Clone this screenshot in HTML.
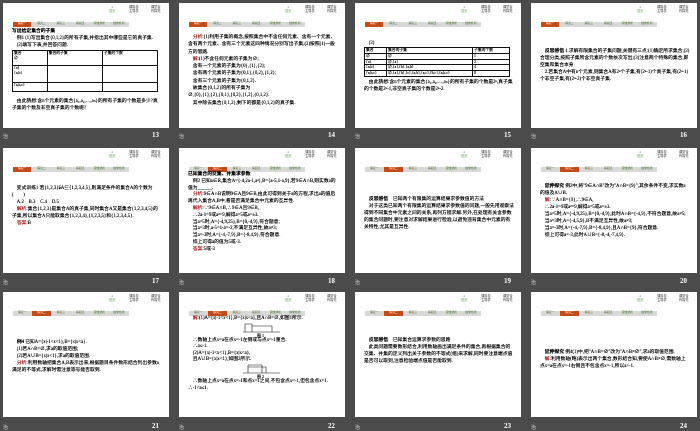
<!DOCTYPE html>
<html><head><meta charset="utf-8"><style>
*{margin:0;padding:0;box-sizing:border-box}
body{width:700px;height:431px;background:#4b4b4b;position:relative;overflow:hidden;font-family:"Liberation Serif","Noto Sans CJK SC",sans-serif;}
.s{position:absolute;width:166px;height:125px;background:#fff;overflow:hidden;color:#111}
.nav{position:absolute;top:3px;font-size:3.2px;line-height:3.6px;color:#222;text-align:center}
.tabs{position:absolute;left:10px;top:19px;height:4.5px;width:116px;background:#d8d8d8;display:flex}
.tabs span{flex:1;font-size:2.8px;line-height:4.5px;color:#3a6a1a;text-align:center;margin-right:1px}
.tabs span.on{background:#c54a1a;color:#fff}
.c{position:absolute;left:9px;right:7px;font-size:4.8px;line-height:7px;color:#000;text-shadow:0 0 .3px #000}
.r{color:#e01010}
.b{font-weight:bold}
.lab{position:absolute;color:#ddd;font-size:5px}
.num{position:absolute;color:#fff;font-size:7px;font-weight:bold;font-family:"Liberation Serif",serif}
table{border-collapse:collapse;font-size:3.8px;line-height:4.8px}
td{border:1px solid #111;vertical-align:top;padding:0 1px}
</style></head><body>

<div class="s" style="left:3px;top:3px">
<div class="nav" style="left:106px">▪<br><span style="color:#5a3">首页</span></div><div class="nav" style="left:126px">课前自<br>主导学</div><div class="nav" style="left:148px">课堂合<br>作探究</div>
<div class="tabs"><span class="on">探究一</span><span>探究二</span><span>探究三</span><span>探究四</span><span>思维辨析</span><span>随堂检测</span></div>
<div class="c" style="top:25px"><b>写出给定集合的子集</b><br>　例1 (1)写出集合{0,1,2}的所有子集,并指出其中哪些是它的真子集.<br>　(2)填写下表,并回答问题.
<table style="width:146px;margin-top:1px"><tr><td style="height:15px">集合<br>∅</td><td>集合的子集</td><td>子集的个数</td></tr><tr><td style="height:17px">{a}<br>{a,b}</td><td></td><td></td></tr><tr><td style="height:9px">{a,b,c}</td><td></td><td></td></tr></table>
<div style="margin-top:6px">　由此猜想:含n个元素的集合{a₁,a₂,…,aₙ}的所有子集的个数是多少?真子集的个数及非空真子集的个数呢?</div></div></div>
<div class="lab" style="left:3px;top:133px">治</div><div class="num" style="left:152px;top:131px">13</div>

<div class="s" style="left:179px;top:3px">
<div class="nav" style="left:106px">▪<br><span style="color:#5a3">首页</span></div><div class="nav" style="left:126px">课前自<br>主导学</div><div class="nav" style="left:148px">课堂合<br>作探究</div>
<div class="tabs"><span class="on">探究一</span><span>探究二</span><span>探究三</span><span>探究四</span><span>思维辨析</span><span>随堂检测</span></div>
<div class="c" style="top:31px;line-height:7.3px">　<span class="r">分析</span>:(1)利用子集的概念,按照集合中不含任何元素、含有一个元素、含有两个元素、含有三个元素这四种情况分别写出子集;(2)按照(1)一般方的思路.<br>　<span class="r">解</span>:(1)不含任何元素的子集为∅;<br>　含有一个元素的子集为{0},{1},{2};<br>　含有两个元素的子集为{0,1},{0,2},{1,2};<br>　含有三个元素的子集为{0,1,2}.<br>　故集合{0,1,2}的所有子集为<br>∅,{0},{1},{2},{0,1},{0,2},{1,2},{0,1,2}.<br>　其中除去集合{0,1,2},剩下的都是{0,1,2}的真子集.</div></div>
<div class="lab" style="left:179px;top:133px">治</div><div class="num" style="left:328px;top:131px">14</div>

<div class="s" style="left:355px;top:3px">
<div class="nav" style="left:106px">▪<br><span style="color:#5a3">首页</span></div><div class="nav" style="left:126px">课前自<br>主导学</div><div class="nav" style="left:148px">课堂合<br>作探究</div>
<div class="tabs"><span class="on">探究一</span><span>探究二</span><span>探究三</span><span>探究四</span><span>思维辨析</span><span>随堂检测</span></div>
<div class="c" style="top:37px">　(2)
<table style="width:146px"><tr><td style="width:22px">集合</td><td>集合的子集</td><td style="width:37px">子集的个数</td></tr><tr><td>∅</td><td>∅</td><td>1</td></tr><tr><td>{a}</td><td>∅,{a}</td><td>2</td></tr><tr><td>{a,b}</td><td>∅,{a},{b},{a,b}</td><td>4</td></tr><tr><td>{a,b,c}</td><td>∅,{a},{b},{c},{a,b},{a,c},{b,c},{a,b,c}</td><td>8</td></tr></table>
<div style="margin-top:2px">　由此猜想:含n个元素的集合{a₁,a₂,…,aₙ}的所有子集的个数是2ⁿ,真子集的个数是2ⁿ-1,非空真子集的个数是2ⁿ-2.</div></div></div>
<div class="lab" style="left:355px;top:133px">治</div><div class="num" style="left:504px;top:131px">15</div>

<div class="s" style="left:531px;top:3px">
<div class="nav" style="left:106px">▪<br><span style="color:#5a3">首页</span></div><div class="nav" style="left:126px">课前自<br>主导学</div><div class="nav" style="left:148px">课堂合<br>作探究</div>
<div class="tabs"><span class="on">探究一</span><span>探究二</span><span>探究三</span><span>探究四</span><span>思维辨析</span><span>随堂检测</span></div>
<div class="c" style="top:45px">　<b>反思感悟</b> 1.求解有限集合的子集问题,关键有三点:(1)确定所求集合;(2)合理分类,按照子集所含元素的个数依次写出;(3)注意两个特殊的集合,即空集和集合本身.<br>　2.若集合A中有n个元素,则集合A有2ⁿ个子集,有(2ⁿ-1)个真子集,有(2ⁿ-1)个非空子集,有(2ⁿ-2)个非空真子集.</div></div>
<div class="lab" style="left:531px;top:133px">治</div><div class="num" style="left:680px;top:131px">16</div>

<div class="s" style="left:3px;top:148px">
<div class="nav" style="left:106px">▪<br><span style="color:#5a3">首页</span></div><div class="nav" style="left:126px">课前自<br>主导学</div><div class="nav" style="left:148px">课堂合<br>作探究</div>
<div class="tabs"><span class="on">探究一</span><span>探究二</span><span>探究三</span><span>探究四</span><span>思维辨析</span><span>随堂检测</span></div>
<div class="c" style="top:37px">　变式训练1 若{1,2,3}⫋A⊆{1,2,3,4,5},则满足条件的集合A的个数为(　　)<br>　A.2　B.3　C.4　D.5<br>　<span class="r">解析</span>:集合{1,2,3}是集合A的真子集,同时集合A又是集合{1,2,3,4,5}的子集,所以集合A只能取集合{1,2,3,4},{1,2,3,5}和{1,2,3,4,5}.<br>　<span class="r">答案</span>:B</div></div>
<div class="lab" style="left:3px;top:279px">治</div><div class="num" style="left:152px;top:277px">17</div>

<div class="s" style="left:179px;top:148px">
<div class="nav" style="left:106px">▪<br><span style="color:#5a3">首页</span></div><div class="nav" style="left:126px">课前自<br>主导学</div><div class="nav" style="left:148px">课堂合<br>作探究</div>
<div class="tabs"><span>探究一</span><span class="on">探究二</span><span>探究三</span><span>探究四</span><span>思维辨析</span><span>随堂检测</span></div>
<div class="c" style="top:24px;line-height:6.8px"><b>已知集合的交集、并集求参数</b><br>　例2 已知a∈R,集合A={-4,2a-1,a²},B={a-5,1-a,9},若9∈A∩B,则实数a的值为______.<br>　<span class="r">分析</span>:9∈A∩B说明9∈A且9∈B,由此可得到关于a的方程,求出a的值后再代入集合A,B中,看是否满足集合中元素的互异性.<br>　<span class="r">解析</span>:∵9∈A∩B,∴9∈A且9∈B,<br>　∴2a-1=9或a²=9,解得a=5或a=±3.<br>　当a=5时,A={-4,9,25},B={0,-4,9},符合题意;<br>　当a=3时,a-5=1-a=-2,不满足互异性,故a≠3;<br>　当a=-3时,A={-4,-7,9},B={-8,4,9},符合题意.<br>　综上可得a的值为5或-3.<br>　<span class="r">答案</span>:5或-3</div></div>
<div class="lab" style="left:179px;top:279px">治</div><div class="num" style="left:328px;top:277px">18</div>

<div class="s" style="left:355px;top:148px">
<div class="nav" style="left:106px">▪<br><span style="color:#5a3">首页</span></div><div class="nav" style="left:126px">课前自<br>主导学</div><div class="nav" style="left:148px">课堂合<br>作探究</div>
<div class="tabs"><span>探究一</span><span class="on">探究二</span><span>探究三</span><span>探究四</span><span>思维辨析</span><span>随堂检测</span></div>
<div class="c" style="top:48px">　<b>反思感悟</b>　已知两个有限集的运算结果求参数值的方法<br>　对于这类已知两个有限集的运算结果求参数值的问题,一般先用观察法得到不同集合中元素之间的关系,再列方程求解.另外,在处理有关含参数的集合问题时,要注意对求解结果进行检验,以避免违背集合中元素的有关特性,尤其是互异性.</div></div>
<div class="lab" style="left:355px;top:279px">治</div><div class="num" style="left:504px;top:277px">19</div>

<div class="s" style="left:531px;top:148px">
<div class="nav" style="left:106px">▪<br><span style="color:#5a3">首页</span></div><div class="nav" style="left:126px">课前自<br>主导学</div><div class="nav" style="left:148px">课堂合<br>作探究</div>
<div class="tabs"><span>探究一</span><span class="on">探究二</span><span>探究三</span><span>探究四</span><span>思维辨析</span><span>随堂检测</span></div>
<div class="c" style="top:35px">　<b>延伸探究</b> 例2中,将"9∈A∩B"改为"A∩B={9}",其余条件不变,求实数a的值及A∪B.<br>　<span class="r">解</span>:∵A∩B={9},∴9∈A,<br>　∴2a-1=9或a²=9,解得a=5或a=±3.<br>　当a=5时,A={-4,9,25},B={0,-4,9},此时A∩B={-4,9},不符合题意,故a≠5;<br>　当a=3时,A={-4,5,9},B不满足互异性,故a≠3;<br>　当a=-3时,A={-4,-7,9},B={-8,4,9},且A∩B={9},符合题意.<br>　综上可得a=-3,此时A∪B={-8,-4,-7,4,9}.</div></div>
<div class="lab" style="left:531px;top:279px">治</div><div class="num" style="left:680px;top:277px">20</div>

<div class="s" style="left:3px;top:292px">
<div class="nav" style="left:106px">▪<br><span style="color:#5a3">首页</span></div><div class="nav" style="left:126px">课前自<br>主导学</div><div class="nav" style="left:148px">课堂合<br>作探究</div>
<div class="tabs"><span>探究一</span><span class="on">探究二</span><span>探究三</span><span>探究四</span><span>思维辨析</span><span>随堂检测</span></div>
<div class="c" style="top:47px">　<b>例4</b> 已知A={x|-1&lt;x&lt;1},B={x|x&lt;a}.<br>　(1)若A∩B=∅,求a的取值范围;<br>　(2)若A∪B={x|x&lt;1},求a的取值范围.<br>　<span class="r">分析</span>:利用数轴把集合A,B表示出来,根据题目条件数形结合列出参数a满足的不等式,求解时需注意等号能否取到.</div></div>
<div class="lab" style="left:3px;top:424px">治</div><div class="num" style="left:152px;top:422px">21</div>

<div class="s" style="left:179px;top:292px">
<div class="nav" style="left:106px">▪<br><span style="color:#5a3">首页</span></div><div class="nav" style="left:126px">课前自<br>主导学</div><div class="nav" style="left:148px">课堂合<br>作探究</div>
<div class="tabs"><span>探究一</span><span class="on">探究二</span><span>探究三</span><span>探究四</span><span>思维辨析</span><span>随堂检测</span></div>
<div class="c" style="top:24px;line-height:6.6px">　<span class="r">解</span>:(1)A={x|-1&lt;x&lt;1},B={x|x&lt;a},且A∩B=∅,如图1所示.
<svg width="40" height="15" style="display:block;margin-left:54px" viewBox="0 0 40 15"><path d="M1 9H38M3 1V9M10 1V9M3 1H10M10 3H30V9" stroke="#111" stroke-width=".6" fill="none"/><text x="15" y="14" font-size="4">图 1</text></svg>
　∴数轴上点x=a在点x=-1左侧或与点x=-1重合.<br>　∴a≤-1.<br>　(2)A={x|-1&lt;x&lt;1},B={x|x&lt;a},<br>　且A∪B={x|x&lt;1},如图2所示.
<svg width="40" height="15" style="display:block;margin-left:54px" viewBox="0 0 40 15"><path d="M1 9H38M6 1V9M20 1V9M6 1H20M6 3H24V9" stroke="#111" stroke-width=".6" fill="none"/><text x="15" y="14" font-size="4">图 2</text></svg>
　∴数轴上点x=a在点x=-1和点x=1之间,不包含点x=-1,但包含点x=1. ∴-1&lt;a≤1.</div></div>
<div class="lab" style="left:179px;top:424px">治</div><div class="num" style="left:328px;top:422px">22</div>

<div class="s" style="left:355px;top:292px">
<div class="nav" style="left:106px">▪<br><span style="color:#5a3">首页</span></div><div class="nav" style="left:126px">课前自<br>主导学</div><div class="nav" style="left:148px">课堂合<br>作探究</div>
<div class="tabs"><span>探究一</span><span class="on">探究二</span><span>探究三</span><span>探究四</span><span>思维辨析</span><span>随堂检测</span></div>
<div class="c" style="top:45px">　<b>反思感悟</b>　已知集合运算求参数的思路<br>　此类问题需要数形结合,利用数轴画出满足条件的集合,再根据集合的交集、并集的定义列出关于参数的不等式(组)来求解,同时要注意端点值是否可以取到,注意检验端点值是否能取到.</div></div>
<div class="lab" style="left:355px;top:424px">治</div><div class="num" style="left:504px;top:422px">23</div>

<div class="s" style="left:531px;top:292px">
<div class="nav" style="left:106px">▪<br><span style="color:#5a3">首页</span></div><div class="nav" style="left:126px">课前自<br>主导学</div><div class="nav" style="left:148px">课堂合<br>作探究</div>
<div class="tabs"><span>探究一</span><span class="on">探究二</span><span>探究三</span><span>探究四</span><span>思维辨析</span><span>随堂检测</span></div>
<div class="c" style="top:57px">　<b>延伸探究</b> 例4(1)中,把"A∩B=∅"改为"A∩B≠∅",求a的取值范围.<br>　<span class="r">解</span>:利用数轴(略)表示出两个集合,数形结合知,要使A∩B≠∅,需数轴上点x=a在点x=-1右侧且不包含点x=-1,所以a&gt;-1.</div></div>
<div class="lab" style="left:531px;top:424px">治</div><div class="num" style="left:680px;top:422px">24</div>

</body></html>
